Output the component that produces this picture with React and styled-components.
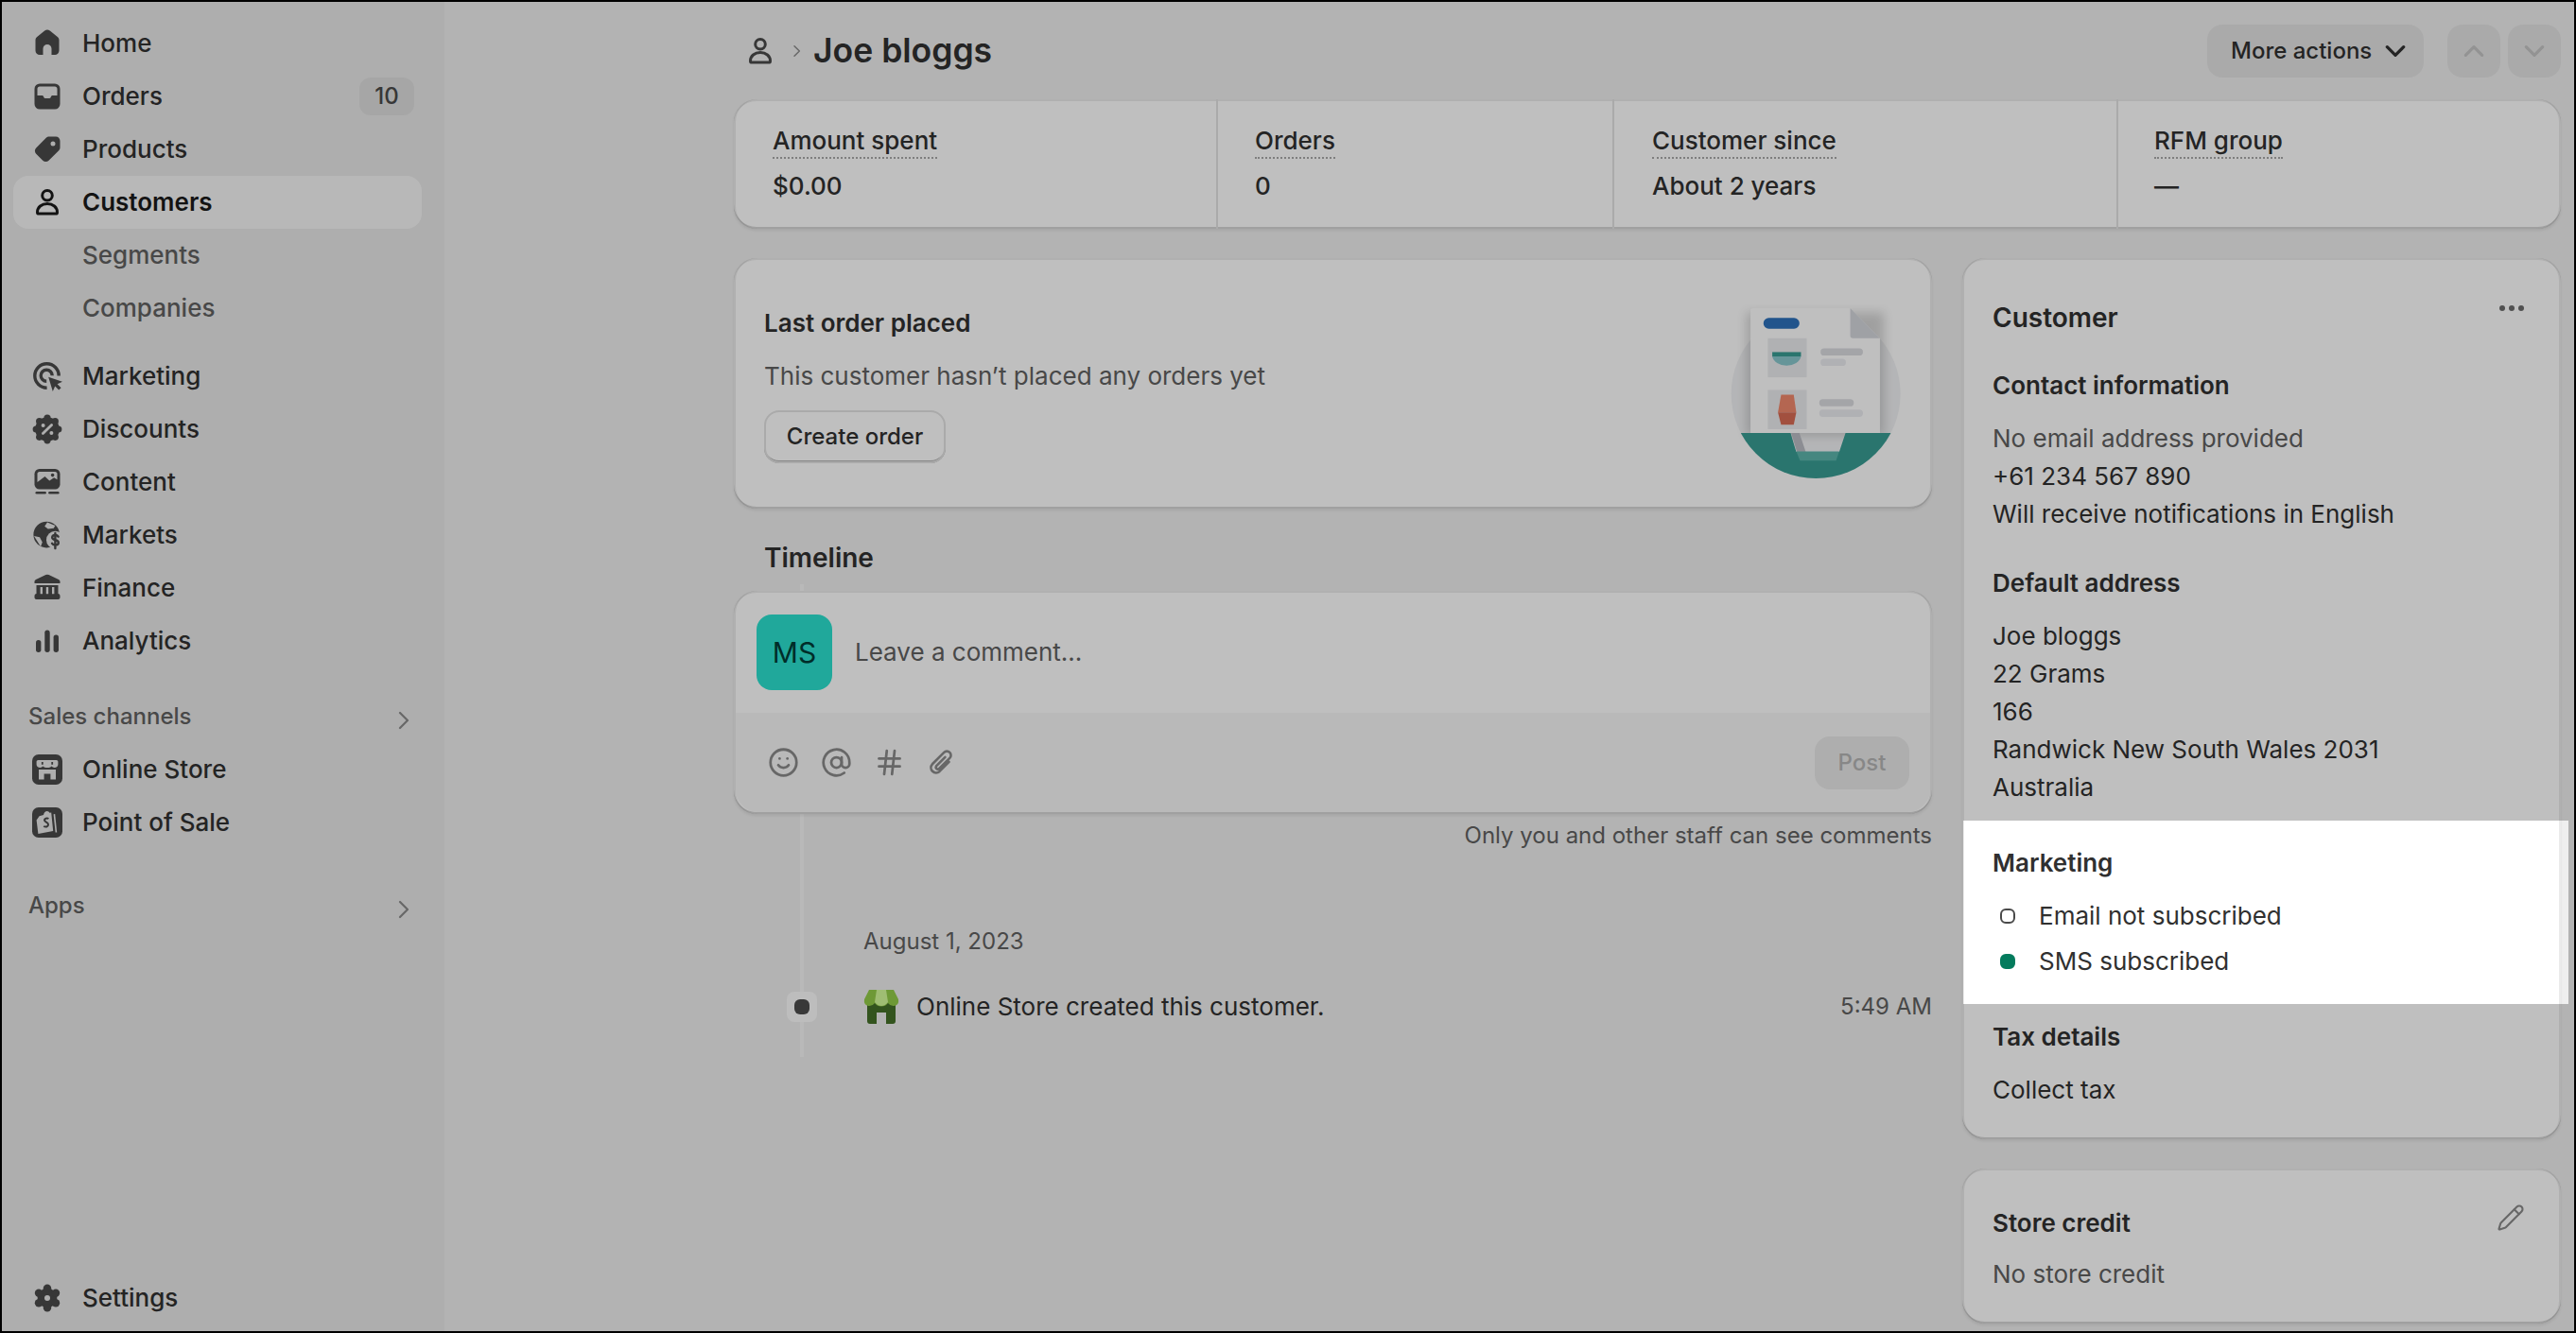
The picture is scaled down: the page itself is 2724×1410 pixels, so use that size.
import React from "react";
import styled, { createGlobalStyle } from "styled-components";
import { Smile, AtSign, Hash, Pencil } from "lucide-react";

const SIDE = "#e8e8e8";
const INK = "#4a4a4a";

const Svg = ({ children, size = 40 }) => (
    <svg width={size} height={size} viewBox="0 0 20 20" fill={INK}>{children}</svg>
);

const HomeIcon = () => (
    <Svg><path d="M8.6 3.3a2.25 2.25 0 0 1 2.8 0l4 3.2c.55.43.85 1.08.85 1.76v5.5A2.25 2.25 0 0 1 14 16h-1.75v-3.25a2.25 2.25 0 0 0-4.5 0V16H6a2.25 2.25 0 0 1-2.25-2.25v-5.5c0-.68.3-1.33.85-1.76z" /></Svg>
);
const OrdersIcon = () => (
    <Svg><path fillRule="evenodd" d="M6 3.25h8A2.75 2.75 0 0 1 16.75 6v8A2.75 2.75 0 0 1 14 16.75H6A2.75 2.75 0 0 1 3.25 14V6A2.75 2.75 0 0 1 6 3.25zM6 4.75c-.69 0-1.25.56-1.25 1.25v3.5h2.4c.4 0 .75.25.9.6l.2.5c.1.25.35.4.6.4h2.3c.25 0 .5-.15.6-.4l.2-.5c.15-.35.5-.6.9-.6h2.4V6c0-.69-.56-1.25-1.25-1.25z" /></Svg>
);
const TagIcon = () => (
    <Svg><path fillRule="evenodd" d="M11 3.25h3.5c1.24 0 2.25 1 2.25 2.25V9c0 .6-.24 1.17-.66 1.6l-5.3 5.3a2.25 2.25 0 0 1-3.18 0L4.1 12.4a2.25 2.25 0 0 1 0-3.18l5.3-5.3c.42-.43 1-.67 1.6-.67zM13 8.25a1.25 1.25 0 1 0 0-2.5 1.25 1.25 0 0 0 0 2.5z" /></Svg>
);
const PersonIcon = ({ color = "#1a1a1a" }) => (
    <Svg>
        <g fill="none" stroke={color} strokeWidth="1.5">
            <circle cx="10" cy="6.4" r="2.65" />
            <path d="M4.75 15.2c0-2.6 2.3-4.45 5.25-4.45s5.25 1.85 5.25 4.45c0 .5-.4.85-.85.85H5.6c-.45 0-.85-.35-.85-.85z" />
        </g>
    </Svg>
);
const TargetIcon = () => (
    <Svg>
        <g fill="none" stroke={INK} strokeWidth="1.7">
            <path d="M16.1 9.8A6.35 6.35 0 1 0 9.8 16.1" />
            <path d="M12.6 9.6A3 3 0 1 0 9.6 12.6" />
        </g>
        <path d="M10.6 10.4l7.4 2.5-2.7 1.2 2 2-1.2 1.2-2-2-1.2 2.7z" />
    </Svg>
);
const DiscountIcon = () => (
    <Svg>
        <circle cx="10" cy="10" r="6.4" />
        {[0, 45, 90, 135, 180, 225, 270, 315].map((a) => (
            <circle key={a} cx={10 + 5.9 * Math.cos((a * Math.PI) / 180)} cy={10 + 5.9 * Math.sin((a * Math.PI) / 180)} r="1.8" />
        ))}
        <path d="M7.7 12.3l4.6-4.6" stroke={SIDE} strokeWidth="1.4" strokeLinecap="round" />
        <circle cx="7.8" cy="8" r="1" fill={SIDE} />
        <circle cx="12.2" cy="12" r="1" fill={SIDE} />
    </Svg>
);
const ContentIcon = () => (
    <Svg>
        <rect x="3.25" y="3" width="13.5" height="10.75" rx="2.6" />
        <path d="M4.75 5.6c0-.6.5-1.1 1.1-1.1h8.3c.6 0 1.1.5 1.1 1.1v3l-1.700-1-2.400 1.700-2.400-2.300-4 3z" fill={SIDE} />
        <circle cx="12.8" cy="6.3" r=".9" />
        <rect x="3.75" y="15" width="5.7" height="1.3" rx=".65" />
        <rect x="10.6" y="15" width="5.7" height="1.3" rx=".65" />
    </Svg>
);
const MarketsIcon = () => (
    <Svg>
        <circle cx="9.6" cy="9.8" r="6.9" />
        <path d="M10 3.2l-1.4 2.2 1.8 1.4 3-.4 .8-1.4zM3 10.5l3 .6 1.4 2.6-.9 2.4z" fill={SIDE} />
        <circle cx="14.2" cy="12.6" r="4.7" fill={SIDE} />
        <path d="M15.8 10.8c-.3-.5-.9-.8-1.6-.8-.9 0-1.6.5-1.6 1.3s.7 1.1 1.6 1.3c.9.2 1.7.5 1.7 1.4s-.8 1.3-1.7 1.3c-.8 0-1.4-.3-1.7-.9M14.2 9v8" fill="none" stroke={INK} strokeWidth="1.2" strokeLinecap="round" />
    </Svg>
);
const BankIcon = () => (
    <Svg><path fillRule="evenodd" d="M9.2 3l-5.2 2.5c-.45.2-.75.65-.75 1.15v.85h13.5v-.85c0-.5-.3-.95-.75-1.15L10.8 3a1.9 1.9 0 0 0-1.6 0zM4.25 8.5v4.5c-.6.1-1 .6-1 1.2v.8c0 .55.45 1 1 1h11.5c.55 0 1-.45 1-1v-.8c0-.6-.4-1.100-1-1.200V8.500zM6.300 9.500h1.200v3.600H6.300zM9.400 9.500h1.200v3.600H9.400zM12.500 9.500h1.200v3.600h-1.200z" /></Svg>
);
const ChartIcon = () => (
    <Svg>
        <rect x="4" y="9.5" width="2.7" height="6.5" rx="1.35" />
        <rect x="8.65" y="4.3" width="2.7" height="11.7" rx="1.35" />
        <rect x="13.3" y="6.8" width="2.7" height="9.2" rx="1.35" />
    </Svg>
);
const StoreIcon = () => (
    <Svg>
        <rect x="2" y="2" width="16" height="16" rx="3.4" />
        <path d="M5.2 5h9.6c.5 0 .9.4.9.9v1.4c0 1-.8 1.7-1.900 1.700-.6 0-1.200-.3-1.500-.7-.4.4-1 .7-1.500.7H9.200c-.5 0-1.100-.3-1.500-.7-.3.4-.9.7-1.500.7C5.100 9 4.300 8.300 4.300 7.300V5.900c0-.5.4-.9.9-.9z" fill={SIDE} />
        <path d="M7.4 6v1.400M12.600 6v1.400" stroke={INK} strokeWidth=".9" />
        <path d="M5.500 10h9v5.200h-2.800v-3h-3.400v3H5.500z" fill={SIDE} />
    </Svg>
);
const SaleIcon = () => (
    <Svg>
        <rect x="2" y="2" width="16" height="16" rx="3.4" />
        <path d="M5.800 6.600l2.200-.6c.3-1.200 1-2 1.900-2 .6 0 1 .4 1.300.9l.9-.2 1 9.800-7.900 1.500-.9-7.200z" fill={SIDE} />
        <path d="M14.100 5.500l1 9.700-.8.1-1-9.700z" fill={SIDE} />
        <path d="M10.700 8c-.8-.5-2.200-.2-2.200.8 0 1.100 2 1 2 2.300 0 1.200-1.400 1.500-2.400.9" fill="none" stroke={INK} strokeWidth="1" />
    </Svg>
);
const GearIcon = () => (
    <Svg>
        <circle cx="10" cy="10" r="5.2" />
        {[30, 90, 150, 210, 270, 330].map((a) => (
            <circle key={a} cx={10 + 5.2 * Math.cos((a * Math.PI) / 180)} cy={10 + 5.2 * Math.sin((a * Math.PI) / 180)} r="2.1" />
        ))}
        <circle cx="10" cy="10" r="1.5" fill={SIDE} />
    </Svg>
);
const ClipIcon = () => (
    <svg width="33" height="33" viewBox="0 0 28 28" fill="none" stroke="currentColor" strokeWidth="2.2" strokeLinecap="round">
        <path d="M20 13.5L11.500 22a4.600 4.600 0 0 1-6.500-6.500L15.500 5a3.600 3.600 0 0 1 5.100 5.100L11 19.700a1.800 1.800 0 0 1-2.500-2.500l8-8" />
    </svg>
);
const Chevron = ({ d, color = "#8a8a8a", size = 24, width = 2.2 }) => (
    <svg width={size} height={size} viewBox="0 0 24 24" fill="none" stroke={color} strokeWidth={width} strokeLinecap="round" strokeLinejoin="round">
        <path d={d} />
    </svg>
);
const RIGHT = "M9 4l8 8-8 8";
const DOWN = "M4 8l8 8 8-8";
const UP = "M4 16l8-8 8 8";

const Illustration = () => (
    <IllusSvg viewBox="200 125 560 560">
        <defs>
            <filter id="soft" x="-30%" y="-30%" width="160%" height="160%">
                <feGaussianBlur stdDeviation="16" />
            </filter>
            <clipPath id="round"><circle cx="482" cy="408" r="268" /></clipPath>
        </defs>
        <circle cx="482" cy="408" r="268" fill="#f1f2f4" />
        <rect x="262" y="150" width="436" height="390" fill="#000" opacity="0.16" filter="url(#soft)" />
        <path d="M275 146q0-9 9-9h307l94 95v300H275z" fill="#fff" />
        <path d="M591 137l94 95h-86q-8 0-8-8z" fill="#d5d7dc" />
        <rect x="316" y="168" width="114" height="34" rx="17" fill="#2c71bb" />
        <rect x="330" y="232" width="123" height="124" fill="#ebecef" />
        <path d="M344 276h91v14H344z" fill="#389d93" />
        <path d="M344 290h91a46 34 0 0 1-91 0z" fill="#89c7cd" />
        <rect x="497" y="264" width="134" height="23" rx="11" fill="#dbdce1" />
        <rect x="497" y="297" width="80" height="23" rx="11" fill="#ebecf1" />
        <rect x="330" y="396" width="123" height="124" fill="#ebecef" />
        <path d="M372 411h40l8 56H362z" fill="#f1896c" />
        <path d="M362 467h58l-8 39h-40z" fill="#d96b54" />
        <rect x="493" y="425" width="109" height="23" rx="11" fill="#dbdce1" />
        <rect x="493" y="458" width="138" height="23" rx="11" fill="#ebecf1" />
        <g clipPath="url(#round)">
            <path d="M200 532h202l18 60h136l20-60h184v160H200z" fill="#389d93" />
            <path d="M404 532h26l20 60h-28z" fill="#bbbdc4" />
            <path d="M420 591h136l-10 29H432z" fill="#5cb4ab" />
        </g>
    </IllusSvg>
);

const ShopLogo = () => (
    <svg width="38" height="38" viewBox="0 0 38 38">
        <path d="M4 14h30v20q0 3-3 3h-7V25h-10v12H7q-3 0-3-3z" fill="#447028" />
        <path d="M6 1h26l5 10q1 6-4.500 7-4 .5-6.500-3-2.500 3.500-7 3.500t-7-3.500q-2.500 3.500-6.500 3-5.500-1-4.500-7z" fill="#93cd49" />
        <path d="M14 1h10l2 13q-3 4-7 4t-7-4z" fill="#d4fc9a" />
    </svg>
);

const mainNav = [
    { label: "Home", icon: <HomeIcon /> },
    { label: "Orders", icon: <OrdersIcon />, badge: "10" },
    { label: "Products", icon: <TagIcon /> },
    { label: "Customers", icon: <PersonIcon />, active: true },
];
const toolNav = [
    { label: "Marketing", icon: <TargetIcon /> },
    { label: "Discounts", icon: <DiscountIcon /> },
    { label: "Content", icon: <ContentIcon /> },
    { label: "Markets", icon: <MarketsIcon /> },
    { label: "Finance", icon: <BankIcon /> },
    { label: "Analytics", icon: <ChartIcon /> },
];
const stats = [
    { label: "Amount spent", value: "$0.00", width: 510, pad: 41 },
    { label: "Orders", value: "0", width: 419, pad: 39 },
    { label: "Customer since", value: "About 2 years", width: 533, pad: 40 },
    { label: "RFM group", value: "—", width: 470, pad: 38 },
];

const NavItem = ({ item }) => (
    <NavRow $active={item.active}>
        <NavIcon>{item.icon}</NavIcon>
        <NavLabel $active={item.active}>{item.label}</NavLabel>
        {item.badge && <Badge>{item.badge}</Badge>}
    </NavRow>
);

const App = () => {
    return (
        <>
            <Global />
            <Frame>
                <Sidebar>
                    {mainNav.map((n) => <NavItem key={n.label} item={n} />)}
                    <SubRow>Segments</SubRow>
                    <SubRow>Companies</SubRow>
                    <NavGroup>
                        {toolNav.map((n) => <NavItem key={n.label} item={n} />)}
                    </NavGroup>
                    <GroupTitle $top={24}>
                        Sales channels
                        <Chevron d={RIGHT} />
                    </GroupTitle>
                    <NavItem item={{ label: "Online Store", icon: <StoreIcon /> }} />
                    <NavItem item={{ label: "Point of Sale", icon: <SaleIcon /> }} />
                    <GroupTitle $top={32}>
                        Apps
                        <Chevron d={RIGHT} />
                    </GroupTitle>
                    <SettingsWrap>
                        <NavItem item={{ label: "Settings", icon: <GearIcon /> }} />
                    </SettingsWrap>
                </Sidebar>

                <Main>
                    <Header>
                        <Crumbs>
                            <PersonIcon color="#4a4a4a" />
                            <Chevron d={RIGHT} size={16} />
                            <Title>Joe bloggs</Title>
                        </Crumbs>
                        <Actions>
                            <ActionButton>
                                More actions
                                <Chevron d={DOWN} color="#303030" size={26} width={3} />
                            </ActionButton>
                            <PagerGroup>
                                <PagerButton><Chevron d={UP} color="#c4c4c4" size={26} width={3} /></PagerButton>
                                <PagerButton><Chevron d={DOWN} color="#c4c4c4" size={26} width={3} /></PagerButton>
                            </PagerGroup>
                        </Actions>
                    </Header>

                    <StatsCard>
                        {stats.map((s) => (
                            <Stat key={s.label} $w={s.width} $pad={s.pad}>
                                <StatLabel>{s.label}</StatLabel>
                                <StatValue>{s.value}</StatValue>
                            </Stat>
                        ))}
                    </StatsCard>

                    <Columns>
                        <LeftCol>
                            <OrderCard>
                                <div>
                                    <CardTitle>Last order placed</CardTitle>
                                    <Muted>This customer hasn’t placed any orders yet</Muted>
                                    <CreateButton>Create order</CreateButton>
                                </div>
                                <Illustration />
                            </OrderCard>

                            <Timeline>
                                <TimelineLine />
                                <TimelineTitle>Timeline</TimelineTitle>
                                <CommentCard>
                                    <CommentTop>
                                        <Avatar>MS</Avatar>
                                        <Placeholder>Leave a comment...</Placeholder>
                                    </CommentTop>
                                    <CommentBottom>
                                        <ToolIcons>
                                            <ToolIcon><Smile size={33} strokeWidth={2} /></ToolIcon>
                                            <ToolIcon><AtSign size={33} strokeWidth={2} /></ToolIcon>
                                            <ToolIcon><Hash size={33} strokeWidth={2} /></ToolIcon>
                                            <ToolIcon><ClipIcon /></ToolIcon>
                                        </ToolIcons>
                                        <PostButton>Post</PostButton>
                                    </CommentBottom>
                                </CommentCard>
                                <Note>Only you and other staff can see comments</Note>
                                <DateLine>August 1, 2023</DateLine>
                                <EventRow>
                                    <EventDot />
                                    <ShopLogo />
                                    <EventText>Online Store created this customer.</EventText>
                                    <EventTime>5:49 AM</EventTime>
                                </EventRow>
                            </Timeline>
                        </LeftCol>

                        <RightCol>
                            <CustomerCard>
                                <CardHead>
                                    <CardTitle $big>Customer</CardTitle>
                                    <svg width="28" height="20" viewBox="0 0 28 20" fill="#6b6b6b">
                                        <circle cx="4" cy="10" r="3" />
                                        <circle cx="14" cy="10" r="3" />
                                        <circle cx="24" cy="10" r="3" />
                                    </svg>
                                </CardHead>

                                <SubTitle $top={32}>Contact information</SubTitle>
                                <Lines>
                                    <Muted as="div" $flat>No email address provided</Muted>
                                    <Line>+61 234 567 890</Line>
                                    <Line>Will receive notifications in English</Line>
                                </Lines>

                                <SubTitle $top={33}>Default address</SubTitle>
                                <Lines>
                                    <Line>Joe bloggs</Line>
                                    <Line>22 Grams</Line>
                                    <Line>166</Line>
                                    <Line>Randwick New South Wales 2031</Line>
                                    <Line>Australia</Line>
                                </Lines>

                                <Spotlight>
                                    <SubTitle $top={0}>Marketing</SubTitle>
                                    <SubRows>
                                        <SubStatus><StatusDot />Email not subscribed</SubStatus>
                                        <SubStatus><StatusDot $on />SMS subscribed</SubStatus>
                                    </SubRows>
                                </Spotlight>

                                <SubTitle $top={15}>Tax details</SubTitle>
                                <Lines>
                                    <Line>Collect tax</Line>
                                </Lines>
                            </CustomerCard>

                            <CreditCard>
                                <CardHead>
                                    <SubTitle $top={0}>Store credit</SubTitle>
                                    <EditIcon><Pencil size={30} strokeWidth={1.7} /></EditIcon>
                                </CardHead>
                                <CreditText>No store credit</CreditText>
                            </CreditCard>
                        </RightCol>
                    </Columns>
                </Main>
            </Frame>
        </>
    );
};

const Global = createGlobalStyle`
html, body {
    margin: 0;
    padding: 0;
    overflow: hidden;
}
body {
    font-family: Inter, "Liberation Sans", sans-serif;
    font-size: 26px;
    line-height: 40px;
    color: #303030;
}
* {
    box-sizing: border-box;
}
`;

const Frame = styled.div`
width: 2724px;
height: 1410px;
border: 2px solid #000;
display: flex;
overflow: hidden;
background: #efefef;
position: relative;
`;

const Sidebar = styled.nav`
width: 468px;
flex: none;
background: ${SIDE};
padding: 16px 24px 7px 12px;
display: flex;
flex-direction: column;
`;

const NavRow = styled.div`
height: 56px;
display: flex;
align-items: center;
gap: 17px;
padding: 0 8px 0 16px;
border-radius: 16px;
background: ${(p) => (p.$active ? "#f6f6f6" : "transparent")};
`;

const NavIcon = styled.span`
width: 40px;
height: 40px;
flex: none;
display: flex;
`;

const NavLabel = styled.span`
font-weight: ${(p) => (p.$active ? 600 : 500)};
color: ${(p) => (p.$active ? "#1a1a1a" : "#303030")};
flex: 1;
`;

const Badge = styled.span`
background: #dedede;
color: #4a4a4a;
border-radius: 12px;
height: 40px;
width: 58px;
display: flex;
align-items: center;
justify-content: center;
font-size: 24px;
font-weight: 500;
`;

const SubRow = styled.div`
height: 56px;
display: flex;
align-items: center;
padding-left: 73px;
color: #616161;
font-weight: 450;
`;

const NavGroup = styled.div`
margin-top: 16px;
`;

const GroupTitle = styled.div`
height: 56px;
margin-top: ${(p) => p.$top}px;
padding: 0 0 0 16px;
display: flex;
align-items: center;
justify-content: space-between;
font-size: 24px;
font-weight: 550;
color: #616161;
svg {
    margin: 8px 8px 0 0;
}
`;

const SettingsWrap = styled.div`
margin-top: auto;
`;

const Main = styled.main`
flex: 1;
padding: 24px 14px 0 306px;
display: flex;
flex-direction: column;
`;

const Header = styled.header`
height: 56px;
display: flex;
justify-content: space-between;
align-items: center;
`;

const Crumbs = styled.div`
display: flex;
align-items: center;
padding-left: 8px;
gap: 10px;
`;

const Title = styled.h1`
margin: 0;
font-size: 35.5px;
line-height: 48px;
font-weight: 600;
color: #303030;
`;

const Actions = styled.div`
display: flex;
gap: 25px;
`;

const ActionButton = styled.div`
width: 229px;
height: 56px;
border-radius: 16px;
background: #e3e3e3;
display: flex;
align-items: center;
gap: 12px;
padding-left: 25px;
font-size: 24px;
font-weight: 550;
`;

const PagerGroup = styled.div`
display: flex;
gap: 8px;
`;

const PagerButton = styled.div`
width: 56px;
height: 56px;
border-radius: 16px;
background: #e3e3e3;
display: flex;
align-items: center;
justify-content: center;
`;

const card = `
background: #fff;
border-radius: 24px;
box-shadow: inset 0 2px 0 rgba(0, 0, 0, 0.08), inset 2px 0 0 rgba(0, 0, 0, 0.08), inset -2px 0 0 rgba(0, 0, 0, 0.08), inset 0 -2px 0 rgba(0, 0, 0, 0.16), 0 2px 3px rgba(26, 26, 26, 0.08);
`;

const StatsCard = styled.section`
${card}
margin-top: 23px;
height: 137px;
display: flex;
`;

const Stat = styled.div`
width: ${(p) => p.$w}px;
padding: 27px 0 0 ${(p) => p.$pad}px;
border-left: 2px solid #e3e3e3;
display: flex;
flex-direction: column;
align-items: flex-start;
&:first-child {
    border-left: none;
}
`;

const StatLabel = styled.span`
font-weight: 550;
line-height: 34px;
border-bottom: 2px dotted #a8a8a8;
`;

const StatValue = styled.span`
margin-top: 9px;
font-weight: 550;
`;

const Columns = styled.div`
margin-top: 31px;
display: flex;
gap: 32px;
align-items: flex-start;
`;

const LeftCol = styled.div`
width: 1267px;
flex: none;
`;

const RightCol = styled.div`
flex: 1;
`;

const OrderCard = styled.section`
${card}
height: 265px;
padding: 49px 30px 0 32px;
display: flex;
justify-content: space-between;
align-items: flex-start;
`;

const IllusSvg = styled.svg`
width: 187px;
height: 187px;
`;

const CardTitle = styled.div`
font-weight: 600;
font-size: ${(p) => (p.$big ? 28 : 26)}px;
`;

const Muted = styled.p`
margin: ${(p) => (p.$flat ? 0 : "16px 0 0")};
color: #616161;
`;

const CreateButton = styled.div`
margin-top: 16px;
width: 192px;
height: 56px;
border-radius: 16px;
background: #fff;
box-shadow: inset 0 0 0 2px #e3e3e3, inset 0 -3px 0 #b5b5b5;
display: flex;
align-items: center;
justify-content: center;
font-size: 24px;
font-weight: 550;
`;

const Timeline = styled.section`
position: relative;
margin-top: 32px;
`;

const TimelineLine = styled.div`
position: absolute;
left: 70px;
top: 48px;
bottom: -33px;
width: 4px;
background: #f7f7f7;
`;

const TimelineTitle = styled.h2`
margin: 0 0 15px 32px;
font-size: 28px;
line-height: 40px;
font-weight: 600;
`;

const CommentCard = styled.div`
${card}
position: relative;
height: 236px;
display: flex;
flex-direction: column;
`;

const CommentTop = styled.div`
height: 129px;
padding: 25px 24px 0;
display: flex;
gap: 24px;
`;

const Avatar = styled.div`
width: 80px;
height: 80px;
border-radius: 16px;
background: #2be1cf;
color: #003d37;
font-size: 30px;
display: flex;
align-items: center;
justify-content: center;
`;

const Placeholder = styled.div`
height: 80px;
display: flex;
align-items: center;
color: #616161;
`;

const CommentBottom = styled.div`
flex: 1;
background: #f7f7f7;
border-radius: 0 0 24px 24px;
margin: 0 2px 2px;
padding: 0 22px 0 30px;
display: flex;
justify-content: space-between;
align-items: center;
`;

const ToolIcons = styled.div`
display: flex;
gap: 16px;
`;

const ToolIcon = styled.span`
width: 40px;
height: 40px;
display: flex;
align-items: center;
justify-content: center;
color: #8a8a8a;
`;

const PostButton = styled.div`
width: 100px;
height: 56px;
border-radius: 16px;
background: #e8e8e8;
color: #b5b5b5;
font-size: 24px;
font-weight: 550;
display: flex;
align-items: center;
justify-content: center;
`;

const Note = styled.div`
margin-top: 3px;
text-align: right;
font-size: 24px;
color: #616161;
`;

const DateLine = styled.div`
margin: 72px 0 0 137px;
font-size: 24px;
color: #616161;
`;

const EventRow = styled.div`
margin: 29px 0 0 56px;
height: 40px;
display: flex;
align-items: center;
position: relative;
`;

const EventDot = styled.div`
width: 32px;
height: 32px;
border-radius: 8px;
background: #fcfcfc;
margin-right: 49px;
display: flex;
align-items: center;
justify-content: center;
&::after {
    content: "";
    width: 16px;
    height: 16px;
    border-radius: 6px;
    background: #4d4d4d;
}
`;

const EventText = styled.span`
margin-left: 18px;
flex: 1;
`;

const EventTime = styled.span`
font-size: 24px;
color: #616161;
`;

const CustomerCard = styled.section`
${card}
height: 932px;
padding: 43px 0 0 32px;
`;

const CardHead = styled.div`
display: flex;
justify-content: space-between;
align-items: flex-start;
padding-right: 38px;
`;

const SubTitle = styled.div`
margin-top: ${(p) => p.$top}px;
font-weight: 600;
`;

const Lines = styled.div`
margin-top: 16px;
`;

const Line = styled.div``;

const Spotlight = styled.div`
position: relative;
z-index: 2;
margin: 15px -8px 0 -31px;
height: 194px;
padding: 25px 0 0 31px;
box-shadow: 0 0 0 4000px rgba(0, 0, 0, 0.25);
`;

const SubRows = styled.div`
margin-top: 12px;
`;

const SubStatus = styled.div`
height: 48px;
display: flex;
align-items: center;
gap: 25px;
padding-left: 8px;
`;

const StatusDot = styled.span`
width: 16px;
height: 16px;
border-radius: 6px;
background: ${(p) => (p.$on ? "#047b5d" : "transparent")};
border: 2px solid ${(p) => (p.$on ? "#047b5d" : "#4a4a4a")};
`;

const CreditCard = styled.section`
${card}
margin-top: 31px;
height: 164px;
padding: 38px 0 0 32px;
`;

const EditIcon = styled.span`
width: 30px;
height: 30px;
margin-top: -1px;
color: #8a8a8a;
display: flex;
`;

const CreditText = styled.div`
margin-top: 14px;
color: #616161;
`;

export default App;
